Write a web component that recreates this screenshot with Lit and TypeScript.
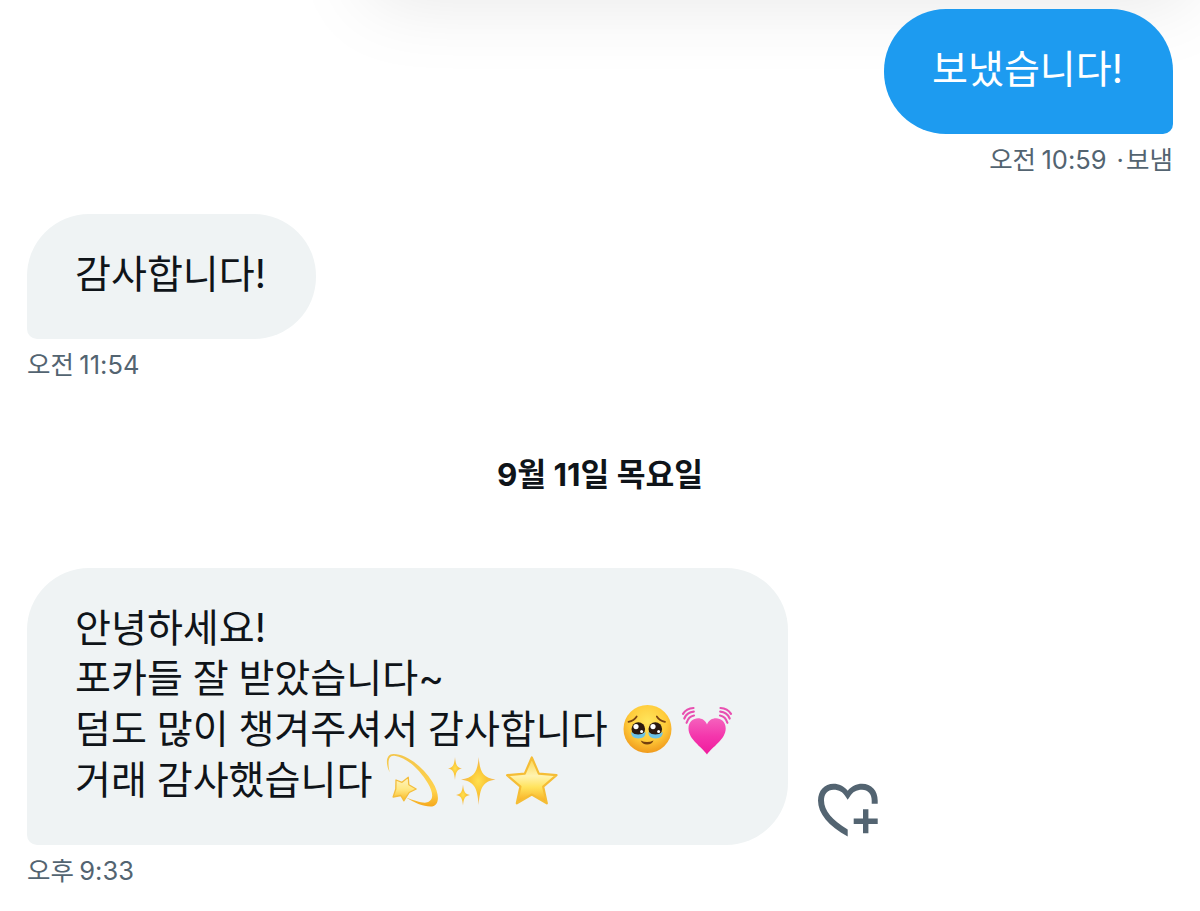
import { css, html, LitElement, svg } from 'lit';
import { customElement, property } from 'lit/decorators.js';

const emojis = {
  tearyFace: svg`
    <defs>
      <radialGradient id="skin" cx="0.5" cy="0.35" r="0.65">
        <stop offset="0" stop-color="#ffe65c" />
        <stop offset="0.6" stop-color="#ffcb3a" />
        <stop offset="1" stop-color="#f09a1c" />
      </radialGradient>
    </defs>
    <circle cx="29.5" cy="25" r="24" fill="url(#skin)" />
    <g fill="#2b1a10">
      <circle cx="20.3" cy="25" r="6.8" />
      <circle cx="37.3" cy="25" r="6.8" />
    </g>
    <g fill="#6cc3e6">
      <path d="M13 28q7 5 14.6 0q0 6.500-7.300 6.500q-7 0-7.300-6.500z" />
      <path d="M30.2 28q7 5 14.6 0q0 6.500-7.300 6.500q-7 0-7.300-6.500z" />
    </g>
    <g fill="#fff">
      <circle cx="18" cy="22.6" r="2.6" />
      <circle cx="35" cy="22.6" r="2.6" />
      <circle cx="23.6" cy="27.5" r="1.5" />
      <circle cx="40.6" cy="27.5" r="1.5" />
    </g>
    <path
      d="M10.5 17.800q5.500-1 8.200-5.300M47 17.800q-5.500-1-8.200-5.300"
      fill="none"
      stroke="#7a4312"
      stroke-width="1.7"
      stroke-linecap="round"
    />
    <path d="M22.7 36.6q6.300 3 12.800 0q-1.500 4-6.400 4q-4.800 0-6.400-4z" fill="#74400f" />
  `,
  beatingHeart: svg`
    <defs>
      <linearGradient id="pink" x1="0" y1="0" x2="0" y2="1">
        <stop offset="0" stop-color="#f562bd" />
        <stop offset="0.5" stop-color="#f436ac" />
        <stop offset="1" stop-color="#f01c9d" />
      </linearGradient>
    </defs>
    <path
      d="M29 50.5C24 43 10.5 35.5 10.5 24.5C10.5 12.5 25.5 11 29 20.5C32.5 11 47.7 12.5 47.7 24.5C47.7 35.5 34 43 29 50.5z"
      fill="url(#pink)"
    />
    <g fill="none" stroke="#e84fb0" stroke-width="2.2" stroke-linecap="round">
      <path d="M5 9.8Q8.5 4.2 15.5 4M6.3 14.5Q9 8.2 15.8 7.7M8.6 18.8Q10.5 12.5 16 11.5" />
      <path d="M53 9.8Q49.5 4.2 42.5 4M51.7 14.5Q49 8.2 42.2 7.7M49.4 18.8Q47.5 12.5 42 11.5" />
    </g>
  `,
  dizzy: svg`
    <defs>
      <linearGradient id="orbit" x1="0" y1="0" x2="0" y2="1">
        <stop offset="0" stop-color="#f3c64c" />
        <stop offset="0.7" stop-color="#ffd34e" />
        <stop offset="1" stop-color="#f5a81c" />
      </linearGradient>
      <linearGradient id="tail" x1="0" y1="0" x2="0" y2="1">
        <stop offset="0" stop-color="#fff5c4" />
        <stop offset="0.5" stop-color="#ffe884" />
        <stop offset="1" stop-color="#f9b81f" />
      </linearGradient>
    </defs>
    <path
      d="M6.7 17.5C2.5 9 2.5-1 10.5-1C24-1 40 12 49.5 27C57.5 40 56.5 51.5 47.5 51.5C40 51.5 31 47.5 23 42.5C33 46 42 49.500 46 46.500C51.500 43 49 35.500 45 28.500C36 13.500 23 2 11.500.7C5-.2 4.500 7.500 6.700 17.500z"
      fill="url(#orbit)"
    />
    <path
      d="M13 25l6 2.300l6.300-5l.5 7.500l7.400 4.200l-7 3.500l-5.400 8.300l-3-5.300l-7.700 1.500l2.700-8z"
      fill="url(#tail)"
      stroke="#f3bd3c"
      stroke-width="1.3"
      stroke-linejoin="round"
    />
  `,
  sparkles: svg`
    <defs>
      <radialGradient id="glow">
        <stop offset="0" stop-color="#ffe04f" />
        <stop offset="0.5" stop-color="#fac536" />
        <stop offset="1" stop-color="#f0b660" />
      </radialGradient>
    </defs>
    <g fill="url(#glow)">
      <path d="M35.7 2C37 18 40 22.5 52.5 24.5C40 26.5 37 32 35.7 50C34.4 32 31 26.5 18 24.5C31 22.5 34.4 18 35.7 2z" />
      <path d="M12 2C12.8 10 14 12.5 19 13.5C14 14.5 12.8 17 12 25C11.2 17 10 14.5 5 13.5C10 12.5 11.2 10 12 2z" />
      <path d="M20 29.5C20.8 37 22 39 27 40C22 41 20.8 43 20 50.5C19.2 43 18 41 13 40C18 39 19.2 37 20 29.5z" />
    </g>
  `,
  star: svg`
    <defs>
      <linearGradient id="gold" x1="0" y1="0" x2="0" y2="1">
        <stop offset="0" stop-color="#fbd34a" />
        <stop offset="0.4" stop-color="#fff3b0" />
        <stop offset="0.65" stop-color="#ffe35c" />
        <stop offset="1" stop-color="#f7a91d" />
      </linearGradient>
    </defs>
    <path
      d="M28.8 2.5L35.8 18.6L53.5 20.2L40.2 31.7L43.8 48.3L28.8 39.6L13.8 48.3L17.4 31.7L4.1 20.2L21.8 18.6z"
      fill="url(#gold)"
      stroke="#f5bd35"
      stroke-width="2.2"
      stroke-linejoin="round"
    />
  `,
};

type EmojiName = keyof typeof emojis;

interface Line {
  text: string;
  emojis?: EmojiName[];
}

@customElement('chat-emoji')
export class ChatEmoji extends LitElement {
  static styles = css`
    :host {
      display: block;
      width: 60px;
      height: 52px;
    }

    svg {
      display: block;
      overflow: visible;
    }
  `;

  @property()
  name: EmojiName;

  render() {
    return html`<svg width="60" height="52" viewBox="0 0 60 52">
      ${emojis[this.name]}
    </svg>`;
  }
}

@customElement('chat-message')
export class ChatMessage extends LitElement {
  static styles = css`
    :host {
      display: flex;
      flex-direction: column;
      align-items: flex-start;
    }

    :host([sent]) {
      align-items: flex-end;
    }

    .row {
      display: flex;
      align-items: flex-end;
      gap: 30px;
    }

    .bubble {
      box-sizing: border-box;
      padding: 35px 50px 39px 48px;
      border-radius: 62px 62px 62px 10px;
      background-color: #eff3f4;
      color: #0f1419;
      font-size: 39.1px;
      line-height: 49px;
      word-spacing: -1.2px;
    }

    :host([sent]) .bubble {
      border-radius: 62px 62px 10px 62px;
      background-color: #1d9bf0;
      color: #ffffff;
    }

    .line {
      display: flex;
      height: 50.75px;
      white-space: pre;
    }

    .emojis {
      display: flex;
      margin-left: 10.5px;
    }

    .time {
      display: flex;
      margin-top: 8px;
      color: #536471;
      font-size: 25.5px;
      font-kerning: none;
      line-height: 36px;
      word-spacing: -1.8px;
    }

    .status {
      margin-left: 10px;
      word-spacing: -5px;
    }

    .react {
      width: 60px;
      height: 54px;
      margin-bottom: 8px;
      padding: 0;
      border-width: 0;
      background-color: transparent;
    }

    .react svg {
      display: block;
      overflow: visible;
    }
  `;

  @property({ type: Array })
  lines: Line[] = [];

  @property()
  time: string;

  @property()
  status = '';

  @property({ type: Boolean, reflect: true })
  sent = false;

  @property({ type: Boolean })
  reactable = false;

  render() {
    return html`
      <div class="row">
        <div class="bubble">${this.lines.map((line) => this.renderLine(line))}</div>
        ${this.reactable ? this.renderReact() : ''}
      </div>
      <div class="time">
        <span>${this.time}</span>
        ${this.status ? html`<span class="status">· ${this.status}</span>` : ''}
      </div>
    `;
  }

  renderLine(line: Line) {
    return html`<div class="line">
      <span>${line.text}</span>${line.emojis
        ? html`<span class="emojis"
            >${line.emojis.map((name) => html`<chat-emoji name=${name}></chat-emoji>`)}</span
          >`
        : ''}
    </div>`;
  }

  renderReact() {
    return html`<button class="react">
      <svg width="60" height="54" viewBox="0 0 60 54" fill="#536471">
        <path
          d="M29.7 53.5C10.5 43 0 30.5 0 17.5C0 7.5 6.5.7 15.5.7C21 .7 26 3 29.7 7.7C33.5 3 38.5.7 44 .7C53.5.7 59.7 7.5 59.7 17.5V20.7H53.7V17.5C53.7 11 50 6.7 44 6.7C38.5 6.7 34.5 9 32.2 13L29.7 16.7L27.2 13C25 9 21 6.7 15.5 6.7C9.5 6.7 6 11 6 17.5C6 27.5 14.5 37.5 29.7 46.5z"
        />
        <path d="M45 26.3h5.4v9.3h9.3v5.4h-9.3v9.3h-5.4v-9.3h-9.3v-5.4h9.3z" />
      </svg>
    </button>`;
  }
}

@customElement('app-root')
export class AppRoot extends LitElement {
  static styles = css`
    :host {
      display: block;
      position: relative;
      box-sizing: border-box;
      height: 911px;
      padding: 9px 27px 0;
      overflow: hidden;
      background-color: #ffffff;
      font-family: Inter, 'Noto Sans CJK KR', sans-serif;
    }

    /* soft shadow cast by the header above the conversation */
    .shade {
      position: absolute;
      top: -100px;
      left: 370px;
      width: 820px;
      height: 100px;
      box-shadow: 0 0 80px rgba(0, 0, 0, 0.1);
    }

    .conversation {
      position: relative;
      display: flex;
      flex-direction: column;
    }

    .reply {
      margin-top: 36px;
    }

    .date {
      margin: 70px 0 71px;
      color: #0f1419;
      font-size: 31.3px;
      font-weight: 700;
      line-height: 44px;
      text-align: center;
    }
  `;

  render() {
    return html`
      <div class="shade"></div>
      <div class="conversation">
        <chat-message
          sent
          .lines=${[{ text: '보냈습니다!' }]}
          time="오전 10:59"
          status="보냄"
        ></chat-message>
        <chat-message class="reply" .lines=${[{ text: '감사합니다!' }]} time="오전 11:54"></chat-message>
        <div class="date">9월 11일 목요일</div>
        <chat-message
          reactable
          .lines=${[
            { text: '안녕하세요!' },
            { text: '포카들 잘 받았습니다~' },
            { text: '덤도 많이 챙겨주셔서 감사합니다', emojis: ['tearyFace', 'beatingHeart'] },
            { text: '거래 감사했습니다', emojis: ['dizzy', 'sparkles', 'star'] },
          ]}
          time="오후 9:33"
        ></chat-message>
      </div>
    `;
  }
}
